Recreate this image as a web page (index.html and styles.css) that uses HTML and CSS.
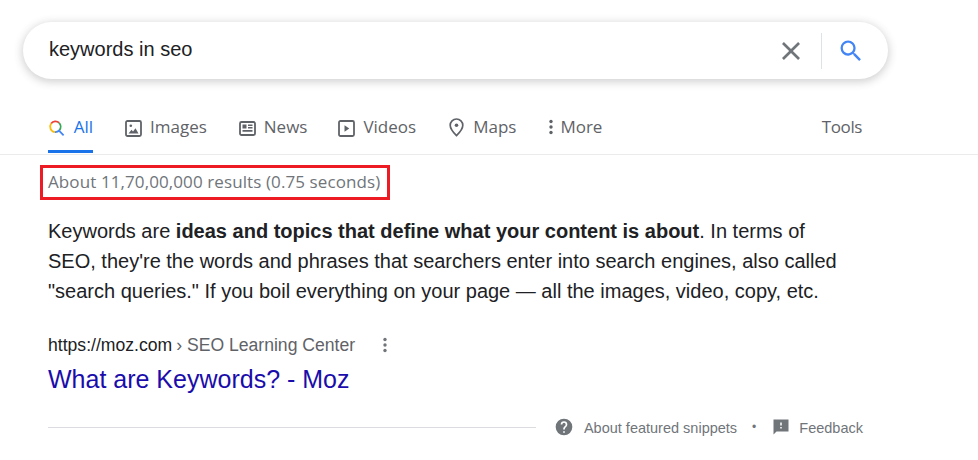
FILE: index.html
```html
<!DOCTYPE html>
<html lang="en">
<head>
    <meta charset="UTF-8">
    <meta name="viewport" content="width=device-width, initial-scale=1.0">
    <title>keywords in seo</title>
    <link rel="stylesheet" href="styles.css">
</head>
<body>

<div class="search-box">
    <span class="search-text">keywords in seo</span>
    <svg class="clear-icon" width="24" height="24" viewBox="0 0 24 24"><path fill="#70757a" d="M21 4.900 19.100 3 12 10.100 4.900 3 3 4.900 10.100 12 3 19.100 4.900 21 12 13.900 19.100 21 21 19.100 13.900 12z"/></svg>
    <span class="search-divider"></span>
    <svg class="search-icon" width="28" height="28" viewBox="0 0 24 24"><path fill="#4285f4" d="M15.500 14h-.790l-.280-.270A6.471 6.471 0 0 0 16 9.500 6.500 6.500 0 1 0 9.500 16c1.610 0 3.090-.590 4.230-1.570l.270.280v.790l5 4.990L20.490 19l-4.990-5zm-6 0C7.010 14 5 11.990 5 9.500S7.010 5 9.500 5 14 7.010 14 9.500 11.990 14 9.500 14z"/></svg>
</div>

<div class="tabs">
    <a class="tab tab-active">
        <svg width="18" height="18" viewBox="0 0 24 24" fill="none" stroke-width="2.600">
            <path stroke="#ea4335" d="M4.500 5.500A8 8 0 0 1 16 4.500"/>
            <path stroke="#34a853" d="M16 4.500A8 8 0 0 1 16.500 15"/>
            <path stroke="#4285f4" d="M16.500 15A8 8 0 0 1 10 18 M15.500 15.500 22.500 22.500"/>
            <path stroke="#fbbc05" d="M10 18A8 8 0 0 1 4.500 5.500"/>
        </svg>
        All
    </a>
    <a class="tab tab-images">
        <svg width="17" height="17" viewBox="0 0 17 17"><rect x="1" y="1" width="15" height="15" rx="1.500" fill="none" stroke="#5f6368" stroke-width="1.800"/><circle cx="5.800" cy="5.800" r="1.300" fill="#5f6368"/><path fill="#5f6368" d="M3.500 13.500 6.500 9.800 8 11.500 10.500 8.300 13.500 13.500z"/></svg>
        Images
    </a>
    <a class="tab">
        <svg width="17" height="17" viewBox="0 0 17 17"><rect x="1" y="2" width="15" height="13" rx="1.500" fill="none" stroke="#5f6368" stroke-width="1.800"/><path fill="#5f6368" d="M3.500 4.500h4v4h-4zM9 4.500h4.500v1.500H9zM9 7h4.500v1.500H9zM3.500 10h10v1.800h-10z"/></svg>
        News
    </a>
    <a class="tab tab-videos">
        <svg width="17" height="17" viewBox="0 0 17 17"><rect x="1" y="1" width="15" height="15" rx="1.500" fill="none" stroke="#5f6368" stroke-width="1.800"/><path fill="#5f6368" d="M6.500 5.200v6.600l4.800-3.300z"/></svg>
        Videos
    </a>
    <a class="tab tab-maps">
        <svg width="15" height="19" viewBox="0 0 15 19"><path fill="none" stroke="#5f6368" stroke-width="1.700" d="M7.500 1a6.300 6.300 0 0 0-6.300 6.300c0 4.200 6.300 10.300 6.300 10.300s6.300-6.100 6.300-10.300A6.300 6.300 0 0 0 7.500 1z"/><circle cx="7.500" cy="7.300" r="1.800" fill="#5f6368"/></svg>
        Maps
    </a>
    <a class="tab tab-more">
        <svg width="6" height="18" viewBox="0 0 6 18"><circle fill="#5f6368" cx="3" cy="3.500" r="1.700"/><circle fill="#5f6368" cx="3" cy="9" r="1.700"/><circle fill="#5f6368" cx="3" cy="14.500" r="1.700"/></svg>
        More
    </a>
    <a class="tab tab-tools">Tools</a>
</div>

<div class="result-stats">About 11,70,00,000 results (0.75 seconds)</div>

<div class="content">
    <p class="snippet">Keywords are <b>ideas and topics that define what your content is about</b>. In terms of SEO, they're the words and phrases that searchers enter into search engines, also called "search queries." If you boil everything on your page — all the images, video, copy, etc.</p>

    <div class="cite">
        <span class="cite-host">https://moz.com</span>
        <span class="cite-path">› SEO Learning Center</span>
        <svg class="cite-menu" width="6" height="18" viewBox="0 0 6 18"><circle fill="#70757a" cx="3" cy="3.500" r="1.700"/><circle fill="#70757a" cx="3" cy="9" r="1.700"/><circle fill="#70757a" cx="3" cy="14.500" r="1.700"/></svg>
    </div>
    <a class="result-title">What are Keywords? - Moz</a>

    <div class="snippet-footer">
        <span class="footer-line"></span>
        <svg width="20" height="20" viewBox="0 0 24 24"><path fill="#70757a" d="M12 2a10 10 0 1 0 0 20 10 10 0 0 0 0-20zm1 17h-2v-2h2v2zm2.100-7.700-.9.900c-.8.800-1.200 1.300-1.200 2.800h-2v-.500c0-1.100.4-2.100 1.200-2.800l1.200-1.300c.4-.3.600-.8.600-1.400a2 2 0 1 0-4 0H8a4 4 0 1 1 8 0c0 .900-.4 1.700-.9 2.300z"/></svg>
        <span class="footer-link">About featured snippets</span>
        <span class="footer-dot">•</span>
        <svg width="18" height="18" viewBox="0 0 24 24"><path fill="#70757a" d="M22 2H2v20l4-4h16V2zm-9 12h-2v-2h2v2zm0-4h-2V6h2v4z"/></svg>
        <span class="footer-link footer-feedback">Feedback</span>
    </div>
</div>

</body>
</html>
```

FILE: styles.css
```css
body {
    font-family: "Liberation Sans", Arial, sans-serif;
    margin: 0;
    padding: 0;
    background-color: #fff;
    color: #202124;
    overflow: hidden;
}

.search-box {
    display: flex;
    align-items: center;
    box-sizing: border-box;
    width: 865px;
    height: 57px;
    margin: 22px 0 0 23px;
    padding-left: 26px;
    background-color: #fff;
    border-radius: 29px;
    box-shadow: 0 2px 8px 1px rgba(64, 60, 67, 0.24);
}

.search-text {
    flex: 1;
    font-size: 20px;
    margin-top: -3px;
}

.clear-icon {
    margin-right: 18px;
}

.search-divider {
    width: 1px;
    height: 36px;
    margin-right: 15px;
    background-color: #dfe1e5;
}

.search-icon {
    margin-right: 23px;
}

.tabs {
    display: flex;
    align-items: flex-start;
    box-sizing: border-box;
    height: 76px;
    padding: 38px 116px 0 48px;
    border-bottom: 1px solid #ebebeb;
}

.tab {
    display: flex;
    align-items: flex-start;
    gap: 8px;
    height: 36px;
    margin-right: 31px;
    box-sizing: border-box;
    font-family: "Open Sans", sans-serif;
    font-size: 17px;
    line-height: 20px;
    color: #5f6368;
}

.tab svg {
    margin-top: 3px;
}

.tab-active {
    gap: 9px;
    width: 45px;
    margin-right: 32px;
    color: #1a73e8;
    border-bottom: 3px solid #1a73e8;
    white-space: nowrap;
}

.tab-active svg {
    margin-top: 2px;
}

.tab-images {
    margin-right: 32px;
}

.tab-videos {
    margin-right: 33px;
}

.tab-maps {
    gap: 9px;
}

.tab-maps svg {
    margin-top: 1px;
}

.tab-more {
    gap: 6px;
    margin-left: 1px;
}

.tab-more svg {
    margin-top: 1px;
}

.tab-tools {
    margin: 0 0 0 auto;
    letter-spacing: -0.4px;
}

.result-stats {
    box-sizing: border-box;
    width: 350px;
    height: 35px;
    margin: 10px 0 0 40px;
    padding-left: 5px;
    border: 3px solid #ed1c24;
    font-family: "Open Sans", sans-serif;
    font-size: 17px;
    letter-spacing: 0.1px;
    line-height: 27px;
    color: #70757a;
    white-space: nowrap;
}

.content {
    width: 815px;
    padding-left: 48px;
}

.snippet {
    width: 800px;
    margin: 16px 0 0;
    font-size: 20px;
    line-height: 30px;
    color: #202124;
}

.cite {
    display: flex;
    align-items: center;
    gap: 4px;
    margin-top: 27px;
    height: 24px;
    font-size: 17.6px;
}

.cite-path {
    color: #5f6368;
}

.cite-menu {
    margin-left: 23px;
}

.result-title {
    display: block;
    margin-top: 7px;
    font-size: 25px;
    line-height: 30px;
    color: #1a0dab;
}

.snippet-footer {
    display: flex;
    align-items: center;
    height: 24px;
    margin-top: 21px;
    font-size: 14.500px;
    color: #70757a;
}

.footer-line {
    width: 488px;
    height: 1px;
    margin-right: 18px;
    background-color: #dadce0;
}

.footer-link {
    margin-left: 10px;
    margin-top: 2px;
}

.footer-dot {
    margin: 0 16px 0 15px;
    font-size: 12px;
}

.footer-feedback {
    margin-left: 9px;
}
```
